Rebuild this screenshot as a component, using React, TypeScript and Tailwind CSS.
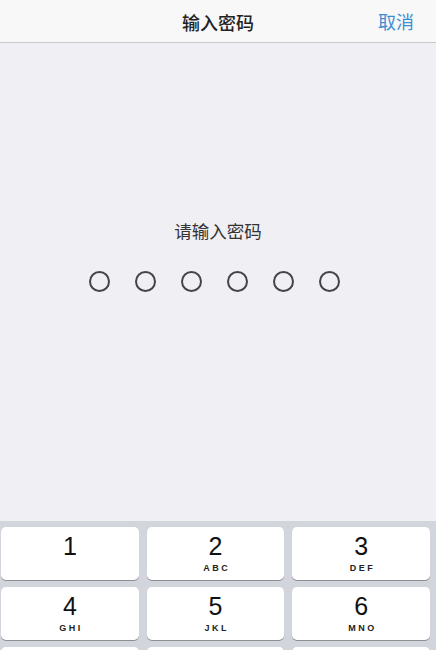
import React from "react";

const keys = [
  { d: "1", l: "" },
  { d: "2", l: "ABC" },
  { d: "3", l: "DEF" },
  { d: "4", l: "GHI" },
  { d: "5", l: "JKL" },
  { d: "6", l: "MNO" },
];

export default function App() {
  return (
    <div
      className="w-[436px] h-[650px] overflow-hidden flex flex-col bg-[#efeff4]"
      style={{ fontFamily: '"Noto Sans CJK SC", "Noto Sans", sans-serif' }}
    >
      <div className="h-[43px] shrink-0 relative flex items-center justify-center bg-[#f8f8f9] border-b border-[#c8c8cc]">
        <span className="text-[18px] font-medium text-[#222] leading-none mt-[1px]">输入密码</span>
        <span className="absolute right-[22px] top-[12px] text-[18px] text-[#3d8fd3] leading-none">取消</span>
      </div>
      <div className="h-[478px] shrink-0 flex flex-col items-center">
        <div className="mt-[179px] text-[17.5px] text-[#333] leading-none">请输入密码</div>
        <div className="mt-[31px] flex gap-[25px] pr-[8px]">
          {[0, 1, 2, 3, 4, 5].map((i) => (
            <div key={i} className="w-[21px] h-[21px] rounded-full border-2 border-[#444]" />
          ))}
        </div>
      </div>
      <div className="flex-1 bg-[#d2d5db] pt-[6px] pl-[1px] pr-[6px]">
        <div className="grid grid-cols-3 gap-x-[8px] gap-y-[7px]">
          {keys.map((k) => (
            <div
              key={k.d}
              className="h-[53px] bg-white rounded-[5px] shadow-[0_1px_0_#8c8f94] flex flex-col items-center"
              style={{ fontFamily: '"Liberation Sans", Arial, sans-serif' }}
            >
              <span className="mt-[7px] text-[25px] leading-[25px] text-[#111]">{k.d}</span>
              {k.l && (
                <span className="mt-[5px] text-[9px] font-bold tracking-[2.5px] pl-[2.5px] text-[#222] leading-none">
                  {k.l}
                </span>
              )}
            </div>
          ))}
          {[7, 8, 9].map((n) => (
            <div key={n} className="h-[53px] bg-white rounded-[5px]" />
          ))}
        </div>
      </div>
    </div>
  );
}
